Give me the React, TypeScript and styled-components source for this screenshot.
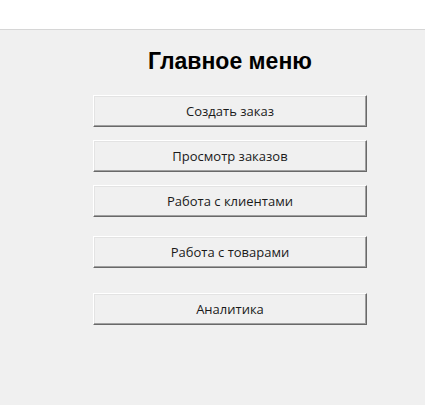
import * as React from 'react'
import styled, { createGlobalStyle } from 'styled-components'

const GlobalStyle = createGlobalStyle`
	html, body {
		margin: 0;
		padding: 0;
		background: #ffffff;
	}
	#root {
		min-height: 405px;
		display: flex;
		flex-direction: column;
	}
`

const TitleBar = styled.div`
	height: 29px;
	background: #ffffff;
	border-bottom: 1px solid #d6d6d6;
`

const Panel = styled.main`
	flex: 1;
	background: #f0f0f0;
	padding: 18px 58px 0 93px;
	display: flex;
	flex-direction: column;
	align-items: stretch;
`

const Heading = styled.h1`
	margin: 0;
	font-family: "Liberation Sans", Arial, sans-serif;
	font-weight: 700;
	font-size: 23px;
	line-height: 26px;
	color: #000;
	text-align: center;
`

const MenuButton = styled.button<{ $gap: number }>`
	margin-top: ${p => p.$gap}px;
	height: 32px;
	background: #f0f0f0;
	font-family: "Open Sans", "Noto Sans", sans-serif;
	font-size: 13px;
	color: #1a1a1a;
	border-style: solid;
	border-width: 1px;
	border-color: #ffffff #696969 #696969 #ffffff;
	box-shadow: inset -1px -1px 0 #a0a0a0, inset 1px 1px 0 #e3e3e3;
	padding: 0 0 1px;
	cursor: pointer;
`

const items = [
  { label: 'Создать заказ', gap: 21 },
  { label: 'Просмотр заказов', gap: 13 },
  { label: 'Работа с клиентами', gap: 13 },
  { label: 'Работа с товарами', gap: 19 },
  { label: 'Аналитика', gap: 25 },
]

export default function App() {
  return (
    <>
      <GlobalStyle />
      <TitleBar />
      <Panel>
        <Heading>Главное меню</Heading>
        {items.map(it => (
          <MenuButton key={it.label} $gap={it.gap}>{it.label}</MenuButton>
        ))}
      </Panel>
    </>
  )
}
